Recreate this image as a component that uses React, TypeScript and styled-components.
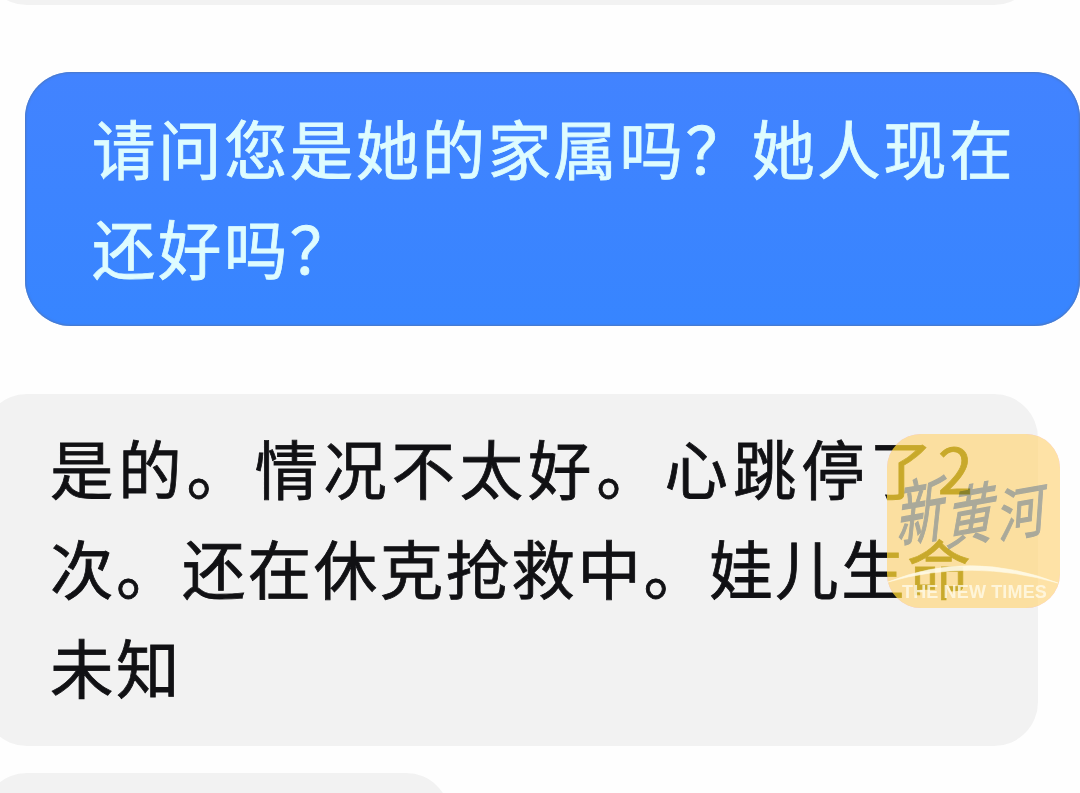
import React from "react";
import styled, { createGlobalStyle } from "styled-components";

const GlobalStyle = createGlobalStyle`
  * { box-sizing: border-box; }
  html, body { margin: 0; padding: 0; background: #fefefe; overflow: hidden; }
`;

const Screen = styled.main`
  width: 1080px;
  height: 793px;
  overflow: hidden;
  display: flex;
  flex-direction: column;
  position: relative;
  background: #fefefe;
  font-family: "Noto Sans CJK SC", sans-serif;
`;

const Bubble = styled.section<{ $width: number; $height: number }>`
  flex: none;
  width: ${(p) => p.$width}px;
  height: ${(p) => p.$height}px;
  display: flex;
  flex-direction: column;
`;

const Received = styled(Bubble)`
  margin-left: -17px;
  padding: 23px 0 0 67px;
  border-radius: 44px;
  background: #f2f2f2;
  color: #111114;
`;

const PreviousMessage = styled(Received)`
  margin-top: -95px;
`;

const NextMessage = styled(Received)`
  margin-top: 27px;
`;

const Reply = styled(Received)`
  margin-top: 68px;
`;

const Sent = styled(Bubble)`
  margin: 67px 0 0 25px;
  padding: 25px 0 0 67px;
  border-radius: 46px;
  background: linear-gradient(#4283ff, #3785ff);
  box-shadow: inset 0 0 2px 1px #4b78c4;
  color: #defcff;
`;

const Line = styled.div<{ $spacing?: number }>`
  height: 99.5px;
  line-height: 99.5px;
  font-size: 63.4px;
  letter-spacing: ${(p) => p.$spacing ?? 2.55}px;
  -webkit-text-stroke: 0.8px currentColor;
  white-space: nowrap;
`;

const Watermark = styled.aside`
  position: absolute;
  left: 887px;
  top: 434px;
  width: 173px;
  height: 174px;
`;

const Tint = styled.div<{ $color: string; $blend: string }>`
  position: absolute;
  inset: 0;
  border-radius: 34px;
  background: ${(p) => p.$color};
  mix-blend-mode: ${(p) => p.$blend};
`;

const Masthead = styled.div`
  position: absolute;
  inset: 33px 0 auto 13px;
  display: flex;
  gap: 3px;
  mix-blend-mode: multiply;
`;

const Brush = styled.span<{ $drop: number; $slant: number; $stretch: number }>`
  width: 47px;
  height: 80px;
  margin-top: ${(p) => p.$drop}px;
  font-size: 47px;
  line-height: 80px;
  color: #adc2f5;
  -webkit-text-stroke: 0.9px currentColor;
  transform: skew(${(p) => p.$slant}deg, -10deg) scaleY(${(p) => p.$stretch});
`;

const Arc = styled.svg`
  position: absolute;
  left: 0;
  top: 128px;
`;

const Caption = styled.div`
  position: absolute;
  left: 15px;
  top: 147px;
  font: bold 18px/22px "Liberation Sans", sans-serif;
  letter-spacing: 0.15px;
  white-space: nowrap;
  color: rgba(255, 250, 232, 0.8);
`;

export default function App() {
  return (
    <>
      <GlobalStyle />
      <Screen>
        <PreviousMessage $width={1055} $height={100} />
        <Sent $width={1055} $height={254}>
          <Line>请问您是她的家属吗？她人现在</Line>
          <Line>还好吗？</Line>
        </Sent>
        <Reply $width={1055} $height={352}>
          <Line $spacing={4.9}>是的。情况不太好。心跳停了2</Line>
          <Line>次。还在休克抢救中。娃儿生命</Line>
          <Line>未知</Line>
        </Reply>
        <NextMessage $width={467} $height={100} />
        <Watermark>
          <Tint $color="rgb(250, 173, 154)" $blend="multiply" />
          <Tint $color="rgb(196, 165, 32)" $blend="screen" />
          <Masthead>
            <Brush $drop={0} $slant={-6} $stretch={1.55}>新</Brush>
            <Brush $drop={4} $slant={-10} $stretch={1.45}>黄</Brush>
            <Brush $drop={2} $slant={-4} $stretch={1.25}>河</Brush>
          </Masthead>
          <Arc width="173" height="24" viewBox="0 0 173 24">
            <path
              d="M1 20 Q83 -13 171 21 Q84 -4 1 20Z"
              fill="#fffbea"
              stroke="#fffbea"
              strokeWidth="0.6"
              opacity="0.9"
            />
          </Arc>
          <Caption>THE NEW TIMES</Caption>
        </Watermark>
      </Screen>
    </>
  );
}
